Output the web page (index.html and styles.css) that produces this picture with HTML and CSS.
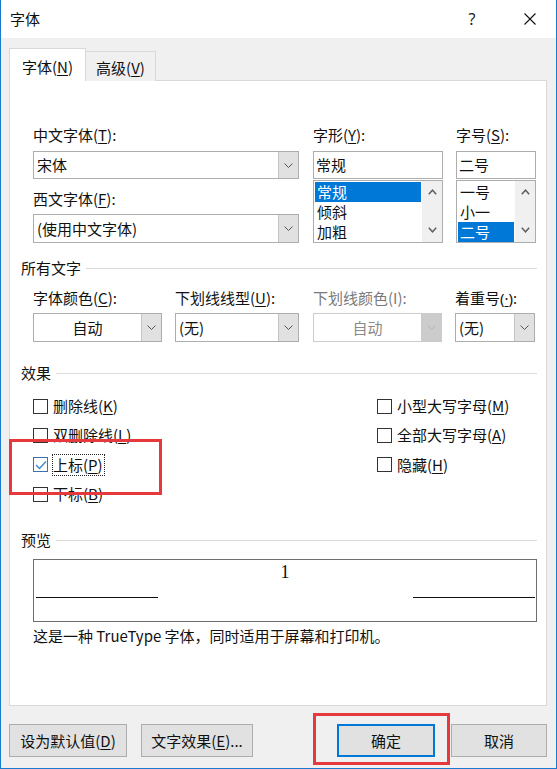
FILE: index.html
```html
<!DOCTYPE html>
<html lang="zh-CN">
<head>
<meta charset="utf-8">
<title>字体</title>
<link rel="stylesheet" href="styles.css">
</head>
<body>
<div class="window">
  <div class="titlebar">
    <span class="title">字体</span>
    <span class="help">?</span>
    <span class="close"><svg width="12" height="12" viewBox="0 0 12 12"><path d="M0.5 0.5 L11.5 11.5 M11.5 0.5 L0.5 11.5" stroke="#111" stroke-width="1.1" fill="none"/></svg></span>
  </div>
  <div class="client">
    <div class="tabs">
      <div class="tab active">字体(<u>N</u>)</div>
      <div class="tab">高级(<u>V</u>)</div>
    </div>
    <div class="panel">
      <div class="fontgrid">
        <div class="col col-a">
          <div class="lbl">中文字体(<u>T</u>):</div>
          <div class="combo w-a"><span class="val">宋体</span><span class="arrow"><svg width="9" height="5" viewBox="0 0 9 5"><polyline points="0.5,0.5 4.5,4.5 8.5,0.5" fill="none" stroke="#555" stroke-width="1"/></svg></span></div>
          <div class="lbl lbl-2">西文字体(<u>F</u>):</div>
          <div class="combo w-a c2"><span class="val">(使用中文字体)</span><span class="arrow"><svg width="9" height="5" viewBox="0 0 9 5"><polyline points="0.5,0.5 4.5,4.5 8.5,0.5" fill="none" stroke="#555" stroke-width="1"/></svg></span></div>
        </div>
        <div class="col col-b">
          <div class="lbl">字形(<u>Y</u>):</div>
          <div class="tbox">常规</div>
          <div class="list">
            <div class="items">
              <div class="item sel">常规</div>
              <div class="item">倾斜</div>
              <div class="item">加粗</div>
            </div>
            <div class="sbar">
              <svg width="9" height="6" viewBox="0 0 9 6"><polyline points="0.8,5.2 4.5,1.2 8.2,5.2" fill="none" stroke="#606060" stroke-width="1.5"/></svg>
              <svg width="9" height="6" viewBox="0 0 9 6"><polyline points="0.8,0.8 4.5,4.8 8.2,0.8" fill="none" stroke="#606060" stroke-width="1.5"/></svg>
            </div>
          </div>
        </div>
        <div class="col col-c">
          <div class="lbl">字号(<u>S</u>):</div>
          <div class="tbox">二号</div>
          <div class="list">
            <div class="items">
              <div class="item">一号</div>
              <div class="item">小一</div>
              <div class="item sel">二号</div>
            </div>
            <div class="sbar">
              <svg width="9" height="6" viewBox="0 0 9 6"><polyline points="0.8,5.2 4.5,1.2 8.2,5.2" fill="none" stroke="#606060" stroke-width="1.5"/></svg>
              <svg width="9" height="6" viewBox="0 0 9 6"><polyline points="0.8,0.8 4.5,4.8 8.2,0.8" fill="none" stroke="#606060" stroke-width="1.5"/></svg>
            </div>
          </div>
        </div>
      </div>

      <div class="ghead h1"><span>所有文字</span></div>
      <div class="allrow">
        <div class="field f1">
          <div class="lbl">字体颜色(<u>C</u>):</div>
          <div class="combo"><span class="val center">自动</span><span class="arrow"><svg width="9" height="5" viewBox="0 0 9 5"><polyline points="0.5,0.5 4.5,4.5 8.5,0.5" fill="none" stroke="#555" stroke-width="1"/></svg></span></div>
        </div>
        <div class="field f2">
          <div class="lbl">下划线线型(<u>U</u>):</div>
          <div class="combo"><span class="val">(无)</span><span class="arrow"><svg width="9" height="5" viewBox="0 0 9 5"><polyline points="0.5,0.5 4.5,4.5 8.5,0.5" fill="none" stroke="#555" stroke-width="1"/></svg></span></div>
        </div>
        <div class="field f3">
          <div class="lbl dis">下划线颜色(I):</div>
          <div class="combo disabled"><span class="val center">自动</span><span class="arrow"><svg width="9" height="5" viewBox="0 0 9 5"><polyline points="0.5,0.5 4.5,4.5 8.5,0.5" fill="none" stroke="#b5b5b5" stroke-width="1"/></svg></span></div>
        </div>
        <div class="field f4">
          <div class="lbl">着重号<span class="latin">(<u>·</u>):</span></div>
          <div class="combo"><span class="val">(无)</span><span class="arrow"><svg width="9" height="5" viewBox="0 0 9 5"><polyline points="0.5,0.5 4.5,4.5 8.5,0.5" fill="none" stroke="#555" stroke-width="1"/></svg></span></div>
        </div>
      </div>

      <div class="ghead h2"><span>效果</span></div>
      <div class="effects">
        <div class="chk"><span class="box"></span><span class="txt">删除线(<u>K</u>)</span></div>
        <div class="chk"><span class="box"></span><span class="txt">小型大写字母(<u>M</u>)</span></div>
        <div class="chk"><span class="box"></span><span class="txt">双删除线(<u>L</u>)</span></div>
        <div class="chk"><span class="box"></span><span class="txt">全部大写字母(<u>A</u>)</span></div>
        <div class="chk"><span class="box checked"><svg width="12" height="10" viewBox="0 0 12 10"><polyline points="1,5 4.5,8.5 11,1.5" fill="none" stroke="#3a86d0" stroke-width="1.4"/></svg></span><span class="txt focus">上标(<u>P</u>)</span></div>
        <div class="chk"><span class="box"></span><span class="txt">隐藏(<u>H</u>)</span></div>
        <div class="chk"><span class="box"></span><span class="txt">下标(<u>B</u>)</span></div>
      </div>

      <div class="ghead h3"><span>预览</span></div>
      <div class="preview">
        <div class="pv-num">1</div>
        <div class="pv-lines"><span class="pv-line"></span><span class="pv-line"></span></div>
      </div>
      <div class="caption">这是一种 TrueType 字体，同时适用于屏幕和打印机。</div>
    </div>

    <div class="buttons">
      <div class="btn b1">设为默认值(<u>D</u>)</div>
      <div class="btn b2">文字效果(<u>E</u>)...</div>
      <div class="btn b3 default">确定</div>
      <div class="btn b4">取消</div>
    </div>
  </div>
  <div class="annot a1"></div>
  <div class="annot a2"></div>
</div>
</body>
</html>
```
FILE: styles.css
```css
* { box-sizing: border-box; }
html, body { margin: 0; padding: 0; }
body {
  width: 557px;
  height: 769px;
  overflow: hidden;
  background: #fff;
  font-family: "Noto Sans CJK SC", "Noto Sans", sans-serif;
  font-size: 15px;
  color: #111;
}
u { text-decoration: underline; text-underline-offset: 2px; }
.latin { font-family: "Noto Sans", sans-serif; }

.window {
  position: relative;
  width: 557px;
  height: 769px;
  border-left: 1px solid #1a7ad2;
  border-right: 1px solid #1a7ad2;
  border-bottom: 1px solid #1a7ad2;
  display: flex;
  flex-direction: column;
}

.titlebar {
  height: 38px;
  background: #fff;
  display: flex;
  align-items: center;
  padding-left: 9px;
  flex: none;
}
.title { line-height: 20px; }
.help {
  margin-left: auto;
  width: 46px;
  text-align: center;
  font-family: "Noto Sans", sans-serif;
  font-size: 16px;
  line-height: 20px;
  color: #222;
}
.close {
  margin-left: 12px;
  width: 46px;
  margin-right: 3px;
  display: flex;
  justify-content: center;
  align-items: center;
}

.client {
  flex: 1;
  background: #f0f0f0;
  padding: 10px 9px 0 8px;
}

.tabs {
  display: flex;
  align-items: flex-end;
  height: 33px;
  margin-bottom: -1px;
}
.tab {
  border: 1px solid #d9d9d9;
  border-bottom: none;
  display: flex;
  justify-content: center;
  align-items: center;
  line-height: 20px;
}
.tab.active {
  width: 77px;
  height: 33px;
  background: #fff;
  padding-top: 4px;
  position: relative;
  z-index: 1;
}
.tab:not(.active) {
  width: 71px;
  height: 30px;
  margin-left: -1px;
  background: #f0f0f0;
  padding-top: 3px;
}

.panel {
  background: #fff;
  border: 1px solid #d9d9d9;
  height: 626px;
  padding: 44px 9px 0 11px;
}

.lbl { line-height: 20px; height: 20px; white-space: nowrap; }
.lbl.dis { color: #7a7a7a; }

.fontgrid {
  display: flex;
  margin-left: 12px;
  height: 118px;
}
.col { display: flex; flex-direction: column; }
.col-a { width: 266px; }
.col-b { width: 130px; margin-left: 14px; }
.col-c { width: 80px; margin-left: 13px; }
.col-a .combo { margin-top: 6px; height: 28px; }
.col-a .lbl-2 { margin-top: 10px; }
.col-a .c2 { margin-top: 5px; height: 29px; }

.combo {
  display: flex;
  height: 29px;
  border: 1px solid #adadad;
  background: #fff;
}
.combo .val {
  flex: 1;
  padding-left: 3px;
  display: flex;
  align-items: center;
  line-height: 20px;
  white-space: nowrap;
}
.combo .val.center { justify-content: center; padding-left: 0; }
.combo .arrow {
  width: 20px;
  background: #e1e1e1;
  border-left: 1px solid #c4c4c4;
  display: flex;
  align-items: center;
  justify-content: center;
}
.combo.disabled { border-color: #cccccc; background: #fff; }
.combo.disabled .val { color: #8a8a8a; }
.combo.disabled .arrow { background: #cccccc; border-left-color: #cccccc; }

.tbox {
  margin-top: 6px;
  height: 28px;
  border: 1px solid #adadad;
  padding-left: 2px;
  display: flex;
  align-items: center;
  line-height: 20px;
}
.list {
  margin-top: 1px;
  height: 63px;
  border: 1px solid #adadad;
  display: flex;
}
.items { flex: 1; padding: 1px 1px 0 1px; }
.item {
  height: 20px;
  line-height: 20px;
  padding-left: 2px;
}
.item.sel { background: #0078d7; color: #fff; }
.sbar {
  width: 20px;
  background: #f0f0f0;
  display: flex;
  flex-direction: column;
  align-items: center;
  justify-content: space-between;
  padding: 8px 0 9px;
}

.ghead {
  display: flex;
  align-items: center;
  height: 20px;
  line-height: 20px;
}
.ghead::after {
  content: "";
  flex: 1;
  height: 1px;
  background: #dcdcdc;
  margin-left: 5px;
}
.h1 { margin-top: 15px; }
.h2 { margin-top: 21px; }
.h3 { margin-top: 26px; }

.allrow {
  display: flex;
  margin-left: 12px;
  margin-top: 10px;
}
.field .combo { margin-top: 5px; }
.f1 { width: 129px; }
.f2 { width: 124px; margin-left: 13px; }
.f3 { width: 129px; margin-left: 14px; }
.f4 { width: 80px; margin-left: 13px; }

.effects {
  display: grid;
  grid-template-columns: 344px 1fr;
  grid-auto-rows: 20px;
  row-gap: 9.4px;
  margin-left: 12px;
  margin-top: 13px;
}
.chk { display: flex; align-items: center; }
.box {
  width: 15px;
  height: 15px;
  border: 1px solid #333;
  background: #fff;
  display: flex;
  align-items: center;
  justify-content: center;
  flex: none;
}
.box.checked { border-color: #3d6fa8; }
.txt {
  margin-left: 5px;
  line-height: 20px;
  white-space: nowrap;
}
.txt.focus {
  margin-left: 4px;
  border: 1px dotted #222;
  padding: 0 1px 0 0;
  height: 22px;
  line-height: 20px;
}

.preview {
  margin-left: 12px;
  margin-top: 9px;
  height: 63px;
  border: 1px solid #6e6e6e;
  display: flex;
  flex-direction: column;
}
.pv-num {
  font-family: "Liberation Serif", serif;
  font-size: 18px;
  line-height: 20px;
  text-align: center;
  margin-top: 2px;
}
.pv-lines {
  display: flex;
  justify-content: space-between;
  padding: 0 1px 0 2px;
  margin-top: 15px;
}
.pv-line { width: 122px; height: 1px; background: #111; }

.caption {
  margin-left: 12px;
  margin-top: 4px;
  line-height: 20px;
  white-space: nowrap;
}

.buttons {
  display: flex;
  margin-top: 18px;
  height: 33px;
}
.btn {
  height: 33px;
  border: 1px solid #adadad;
  background: #e1e1e1;
  display: flex;
  align-items: center;
  justify-content: center;
  line-height: 20px;
  white-space: nowrap;
}
.b1 { width: 118px; }
.b2 { width: 112px; margin-left: 14px; }
.b3 { width: 98px; margin-left: auto; }
.b4 { width: 96px; margin-left: 16px; }
.btn.default { border: 2px solid #0078d7; }

.annot {
  position: absolute;
  border: 3px solid #e6393d;
  pointer-events: none;
}
.a1 { left: 8px; top: 439px; width: 153px; height: 56px; }
.a2 { left: 312px; top: 713px; width: 137px; height: 52px; }
```
